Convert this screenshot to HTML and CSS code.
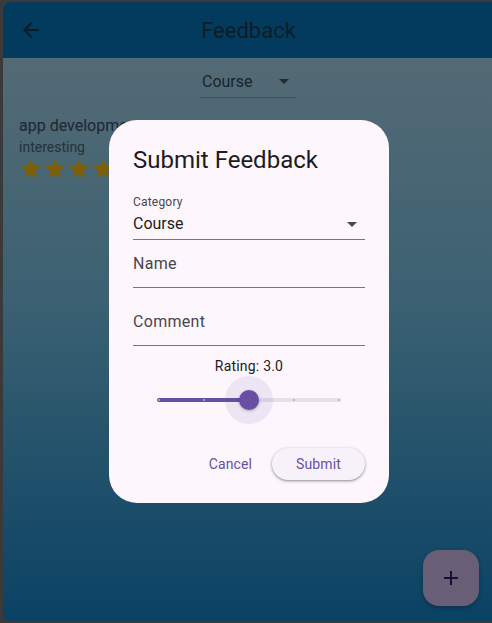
FILE: index.html
```html
<!DOCTYPE html>
<html>
<head>
<meta charset="utf-8">
<link rel="stylesheet" href="styles.css">
</head>
<body>
<div class="window">
  <header class="appbar">
    <button class="back" aria-label="Back">
      <svg viewBox="0 0 24 24" width="24" height="24"><path d="M20 11H7.83l5.59-5.59L12 4l-8 8 8 8 1.41-1.41L7.83 13H20v-2z"/></svg>
    </button>
    <h1 class="title">Feedback</h1>
  </header>
  <main class="content">
    <div class="filter">
      <div class="select">
        <span>Course</span>
        <svg viewBox="0 0 24 24" width="24" height="24"><path d="M7 10l5 5 5-5z"/></svg>
      </div>
    </div>
    <div class="item">
      <div class="item-title">app development</div>
      <div class="item-sub">interesting</div>
      <div class="stars">
        <svg viewBox="0 0 24 24" width="24" height="24"><path d="M12 17.27L18.18 21l-1.64-7.03L22 9.24l-7.19-.61L12 2 9.19 8.63 2 9.24l5.46 5.73L5.82 21z"/></svg>
        <svg viewBox="0 0 24 24" width="24" height="24"><path d="M12 17.27L18.18 21l-1.64-7.03L22 9.24l-7.19-.61L12 2 9.19 8.63 2 9.24l5.46 5.73L5.82 21z"/></svg>
        <svg viewBox="0 0 24 24" width="24" height="24"><path d="M12 17.27L18.18 21l-1.64-7.03L22 9.24l-7.19-.61L12 2 9.19 8.63 2 9.24l5.46 5.73L5.82 21z"/></svg>
        <svg viewBox="0 0 24 24" width="24" height="24"><path d="M12 17.27L18.18 21l-1.64-7.03L22 9.24l-7.19-.61L12 2 9.19 8.63 2 9.24l5.46 5.73L5.82 21z"/></svg>
        <svg viewBox="0 0 24 24" width="24" height="24"><path d="M12 17.27L18.18 21l-1.64-7.03L22 9.24l-7.19-.61L12 2 9.19 8.63 2 9.24l5.46 5.73L5.82 21z"/></svg>
      </div>
    </div>
  </main>

  <button class="fab" aria-label="Add">
    <svg viewBox="0 0 24 24" width="24" height="24"><path d="M19 13h-6v6h-2v-6H5v-2h6V5h2v6h6v2z"/></svg>
  </button>

  <div class="dialog">
    <h2 class="dlg-title">Submit Feedback</h2>
    <div class="field field-select">
      <div class="field-label">Category</div>
      <div class="field-row">
        <span>Course</span>
        <svg viewBox="0 0 24 24" width="24" height="24"><path d="M7 10l5 5 5-5z"/></svg>
      </div>
    </div>
    <div class="field field-name">Name</div>
    <div class="field field-comment">Comment</div>
    <div class="rating">Rating: 3.0</div>
    <div class="slider">
      <div class="track">
        <div class="active"></div>
        <i class="tick t0"></i><i class="tick t1"></i><i class="tick t3 off"></i><i class="tick t4 off"></i>
        <div class="halo"></div>
        <div class="thumb"></div>
      </div>
    </div>
    <div class="actions">
      <button class="btn-text">Cancel</button>
      <button class="btn-elev">Submit</button>
    </div>
  </div>
</div>
</body>
</html>
```
FILE: styles.css
```css
* { box-sizing: border-box; }
html, body { margin: 0; padding: 0; }
body {
  background: #3a3a3a;
  padding: 2px 0 2px 3px;
  font-family: Roboto, "Noto Sans", sans-serif;
  width: 492px;
  height: 623px;
  overflow: hidden;
}
.window {
  position: relative;
  width: 489px;
  height: 619px;
  border-radius: 7px 0 0 7px;
  overflow: hidden;
  background: linear-gradient(180deg, #546a75 56px, #3b6172 300px, #0a4264 619px);
  display: flex;
  flex-direction: column;
}
.appbar {
  height: 56px;
  background: #023b5d;
  display: flex;
  align-items: center;
  position: relative;
  flex-shrink: 0;
}
.back {
  width: 56px;
  height: 56px;
  border: 0;
  background: none;
  padding: 0;
  display: flex;
  align-items: center;
  justify-content: center;
}
.back svg { fill: #0e1a24; }
.title {
  margin: 0;
  position: absolute;
  left: 0;
  right: 0;
  text-align: center;
  font-size: 22px;
  font-weight: 400;
  color: #0f1b25;
  pointer-events: none;
  padding-left: 2px;
}
.content {
  flex: 1;
  display: flex;
  flex-direction: column;
}
.filter {
  display: flex;
  justify-content: center;
  padding-top: 10px;
}
.select {
  width: 96px;
  height: 30px;
  display: flex;
  align-items: center;
  justify-content: space-between;
  border-bottom: 1.5px solid #3e4f58;
  padding: 0 0 3px 2px;
  font-size: 16px;
  color: #18232c;
  margin-left: 1px;
}
.select svg { fill: #202b33; }
.item {
  padding: 16px 16px;
}
.item-title {
  font-size: 16px;
  line-height: 24px;
  color: #1b2630;
  white-space: nowrap;
}
.item-sub {
  font-size: 14px;
  line-height: 20px;
  color: #25313a;
  margin-top: -1px;
}
.stars {
  display: flex;
  margin-top: 0px;
}
.stars svg { fill: #7c5f06; }

.fab {
  position: absolute;
  left: 420px;
  top: 548px;
  width: 56px;
  height: 56px;
  border: 0;
  border-radius: 16px;
  background: #685f77;
  box-shadow: 0 2px 4px rgba(0,0,0,0.25);
  display: flex;
  align-items: center;
  justify-content: center;
  padding: 0;
}
.fab svg { fill: #1d0d33; }

.dialog {
  position: absolute;
  left: 106px;
  top: 118px;
  width: 280px;
  height: 383px;
  background: #fdf7fd;
  border-radius: 28px;
  padding: 24px;
  display: flex;
  flex-direction: column;
  color: #1d1b20;
}
.dlg-title {
  margin: 0;
  font-size: 24px;
  font-weight: 400;
  line-height: 32px;
  color: #1d1b20;
}
.field {
  border-bottom: 1px solid #79747e;
  color: #49454f;
}
.field-select { padding-top: 18px; padding-bottom: 3px; }
.field-label {
  font-size: 12px;
  line-height: 16px;
  color: #49454f;
  letter-spacing: 0.2px;
}
.field-row {
  display: flex;
  align-items: center;
  justify-content: space-between;
  font-size: 16px;
  line-height: 24px;
  color: #1d1b20;
  height: 24px;
  margin-top: 2px;
}
.field-row svg { fill: #49454f; margin-right: 1px; }
.field-name, .field-comment {
  font-size: 16px;
  line-height: 24px;
  padding-bottom: 11px;
  letter-spacing: 0.3px;
}
.field-name { padding-top: 12px; }
.field-comment { padding-top: 22px; }
.rating {
  margin-top: 10px;
  text-align: center;
  font-size: 14px;
  line-height: 20px;
  color: #1d1b20;
  letter-spacing: 0.2px;
}
.slider {
  height: 48px;
  padding: 0 24px;
  display: flex;
  align-items: center;
}
.track {
  position: relative;
  width: 100%;
  height: 4px;
  border-radius: 2px;
  background: #e6e0e9;
}
.active {
  position: absolute;
  left: 0;
  top: 0;
  bottom: 0;
  width: 92px;
  border-radius: 2px;
  background: #6750a4;
}
.tick {
  position: absolute;
  top: 1px;
  width: 2px;
  height: 2px;
  border-radius: 1px;
  background: #b6a9d8;
}
.tick.off { background: #b5aebd; }
.t0 { left: 1px; }
.t1 { left: 46px; }
.t3 { left: 136px; }
.t4 { left: 181px; }
.halo {
  position: absolute;
  left: 68px;
  top: -22px;
  width: 48px;
  height: 48px;
  border-radius: 50%;
  background: rgba(103,80,164,0.1);
}
.thumb {
  position: absolute;
  left: 82px;
  top: -8px;
  width: 20px;
  height: 20px;
  border-radius: 50%;
  background: #6750a4;
  box-shadow: 0 1px 3px rgba(0,0,0,0.3);
}
.actions {
  margin-top: auto;
  display: flex;
  justify-content: flex-end;
  align-items: center;
  gap: 8px;
  margin-bottom: -1px;
}
.btn-text, .btn-elev {
  font-family: Roboto, sans-serif;
  font-size: 14px;
  font-weight: 500;
  color: #6750a4;
  border: 0;
  height: 32px;
  letter-spacing: 0.1px;
}
.btn-text {
  background: none;
  padding: 0 12px;
  font-weight: 400;
}
.btn-elev {
  background: #f7f2fa;
  border-radius: 16px;
  padding: 0 24px;
  width: 93px;
  font-weight: 400;
  box-shadow: 0 1px 2px rgba(0,0,0,0.3), 0 1px 3px 1px rgba(0,0,0,0.12);
}
```
